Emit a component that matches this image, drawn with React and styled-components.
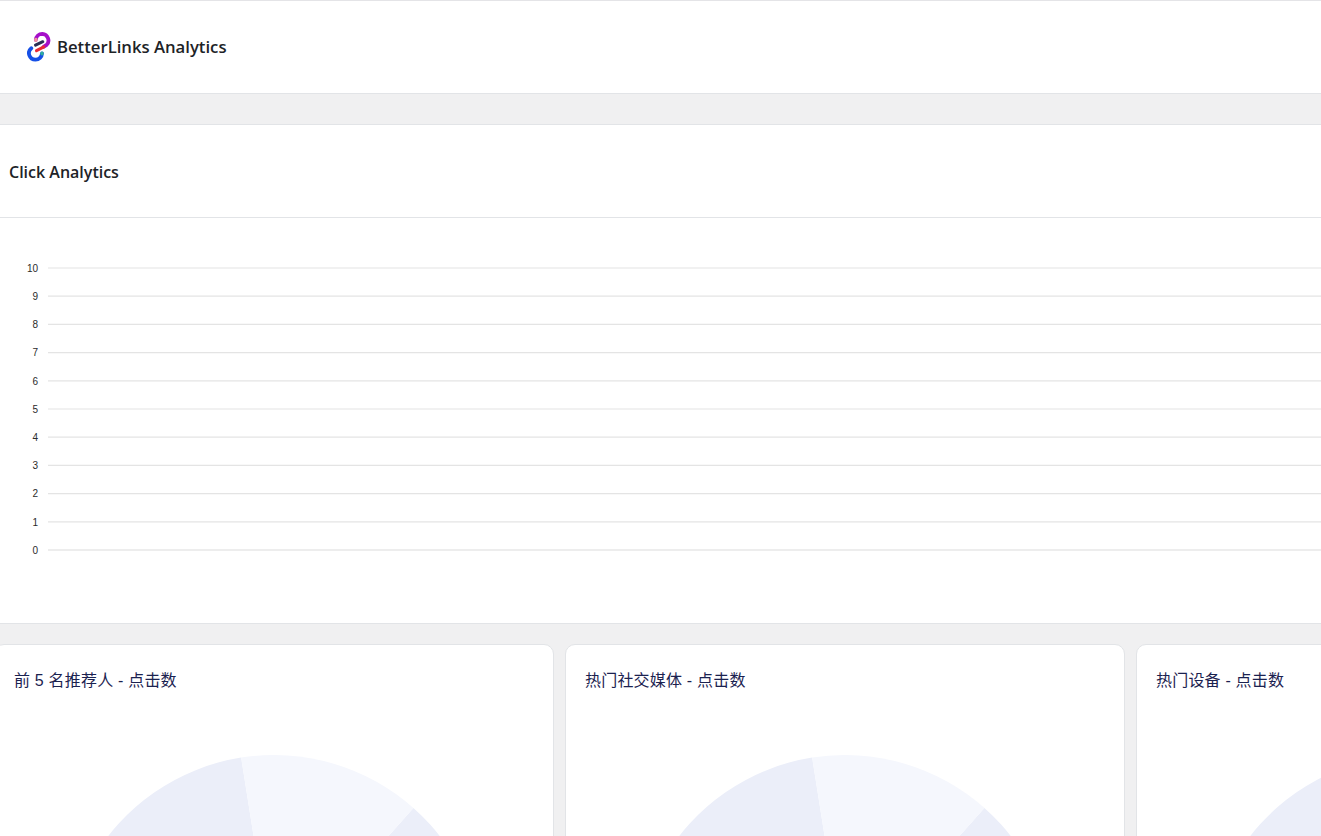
import React from 'react'
import styled, { createGlobalStyle } from 'styled-components'

const GlobalStyle = createGlobalStyle`
  html, body {
    margin: 0;
    padding: 0;
    height: 100%;
    overflow: hidden;
    background: #f0f0f1;
  }
`

const Page = styled.div`
  height: 836px;
  overflow: hidden;
  font-family: 'Open Sans', 'Noto Sans CJK SC', sans-serif;
  color: #1d2327;
`

const TopBar = styled.header`
  box-sizing: border-box;
  height: 94px;
  padding: 0 0 1px 27px;
  background: #fff;
  border-top: 1px solid #e4e4e7;
  border-bottom: 1px solid #e2e4e7;
  display: flex;
  align-items: center;
  gap: 6px;
`

const BrandName = styled.span`
  font-size: 16.700px;
  font-weight: 600;
`

const Section = styled.section`
  margin-top: 30px;
  background: #fff;
  border-top: 1px solid #e2e4e7;
  border-bottom: 1px solid #e2e4e7;
`

const SectionHead = styled.div`
  box-sizing: border-box;
  height: 93px;
  display: flex;
  align-items: center;
  padding: 1px 0 0 9px;
  border-bottom: 1px solid #e2e4e7;
`

const SectionTitle = styled.h2`
  margin: 0;
  font-size: 16px;
  font-weight: 600;
`

const ChartBox = styled.div`
  height: 405px;
`

const ChartSvg = styled.svg`
  display: block;
  width: 100%;
  height: 100%;
`

const AxisLabel = styled.text`
  font-family: 'Liberation Sans', Arial, sans-serif;
  font-size: 10px;
  fill: #2b2b2b;
  text-anchor: end;
`

const CardRow = styled.div`
  display: flex;
  gap: 11px;
  margin: 20px 0 0 -6px;
`

const Card = styled.article`
  flex: 0 0 560px;
  height: 300px;
  box-sizing: border-box;
  background: #fff;
  border: 1px solid #e2e4e7;
  border-radius: 10px;
  padding: 25px 19px 0;
`

const CardTitle = styled.h3`
  margin: 0;
  font-size: 16px;
  line-height: 22px;
  font-weight: 400;
  letter-spacing: 0.2px;
  color: #1b2250;
  font-family: 'Liberation Sans', 'Noto Sans CJK SC', sans-serif;
`

const PieSvg = styled.svg`
  display: block;
  margin: 63px auto 0;
  width: 420px;
  height: 420px;
`

const axisTicks = [10, 9, 8, 7, 6, 5, 4, 3, 2, 1, 0]

const polar = (r, deg) => {
  const rad = (deg * Math.PI) / 180
  return [r + r * Math.sin(rad), r - r * Math.cos(rad)]
}

const slicePath = (r, from, to) => {
  const [x1, y1] = polar(r, from)
  const [x2, y2] = polar(r, to)
  const large = to - from > 180 ? 1 : 0
  return `M${r} ${r}L${x1} ${y1}A${r} ${r} 0 ${large} 1 ${x2} ${y2}Z`
}

const Logo = () => (
  <svg width="24" height="30" viewBox="0 0 24 30" fill="none" strokeLinecap="round">
    <path d="M8.800 8A6.500 6.500 0 0 1 15.300 1.900A6.500 6.500 0 0 1 19.500 13L16.500 14.800" stroke="#a50fc9" strokeWidth="3.800" />
    <path d="M8.800 8.300L8.900 7.500" stroke="#f0929f" strokeWidth="3.400" />
    <path d="M4.300 16.200A6.500 6.500 0 0 0 8.500 27.700A6.500 6.500 0 0 0 15 21.400" stroke="#1650e6" strokeWidth="3.800" />
    <path d="M15 21.700L15 21.300" stroke="#2fae9c" strokeWidth="3.400" />
    <path d="M8.500 13.200L15.800 9.700" stroke="#2b2f55" strokeWidth="3" />
    <path d="M9.500 18.700L16.800 14.900" stroke="#ea2b35" strokeWidth="3" />
  </svg>
)

const Pie = () => (
  <PieSvg viewBox="0 0 420 420">
    <path d={slicePath(210, 41.6, 351)} fill="#ebeef9" />
    <path d={slicePath(210, -9, 41.6)} fill="#f5f7fd" />
  </PieSvg>
)

const cards = ['前 5 名推荐人 - 点击数', '热门社交媒体 - 点击数', '热门设备 - 点击数']

export default function App() {
  return (
    <Page>
      <GlobalStyle />
      <TopBar>
        <Logo />
        <BrandName>BetterLinks Analytics</BrandName>
      </TopBar>
      <Section>
        <SectionHead>
          <SectionTitle>Click Analytics</SectionTitle>
        </SectionHead>
        <ChartBox>
          <ChartSvg>
            {axisTicks.map((tick, i) => {
              const y = 50 + i * 28.2
              return (
                <g key={tick}>
                  <line x1="48" x2="1321" y1={y} y2={y} stroke={tick === 0 ? '#dcdcdc' : '#e4e4e4'} strokeWidth="1.200" />
                  <AxisLabel x="38" y={y + 3.800}>{tick}</AxisLabel>
                </g>
              )
            })}
          </ChartSvg>
        </ChartBox>
      </Section>
      <CardRow>
        {cards.map((title) => (
          <Card key={title}>
            <CardTitle>{title}</CardTitle>
            <Pie />
          </Card>
        ))}
      </CardRow>
    </Page>
  )
}
